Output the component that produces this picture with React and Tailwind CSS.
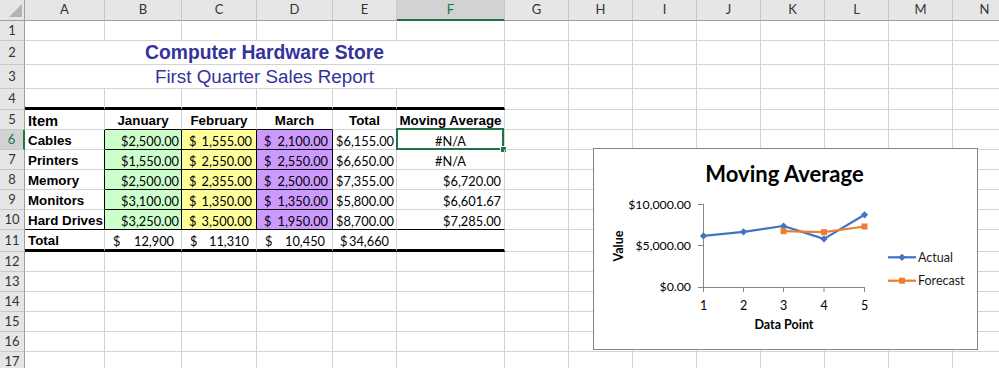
import React from 'react';

const ARIAL = "font-['Liberation_Sans',Arial,sans-serif]";
const CAL = "font-['Lato',sans-serif]";
const GRID_R = 'border-r-[#d4d4d4]';
const GRID_B = 'border-b border-b-[#d4d4d4]';
const BLK_R = 'border-r-black';
const BLK_B = 'border-b border-b-black';
const THICK_B = 'border-b-[3px] border-b-black';

const EXTRA = ['G', 'H', 'I', 'J', 'K', 'L', 'M', 'N'];

function Cell({ w, r = GRID_R, b = GRID_B, className = '', children }) {
  return (
    <div
      className={`relative shrink-0 h-full flex items-end border-r ${r} ${b} whitespace-nowrap leading-[16px] text-black ${w} ${className}`}
    >
      {children}
    </div>
  );
}

function RowHead({ n, sel }) {
  return (
    <div
      className={`shrink-0 w-[25px] h-full flex items-center justify-center border-b border-b-[#c8c8c8] ${CAL} text-[13px] ${
        sel
          ? 'bg-[#d2d2d2] text-[#217346] border-r-2 border-r-[#217346]'
          : 'bg-[#e6e6e6] text-[#333] border-r border-r-[#9e9e9e]'
      }`}
    >
      {n}
    </div>
  );
}

function ColHead({ w, label, sel }) {
  return (
    <div
      className={`shrink-0 h-full flex items-center justify-center border-r border-r-[#c8c8c8] ${CAL} text-[13px] ${w} ${
        sel
          ? 'bg-[#d2d2d2] text-[#217346] border-b-2 border-b-[#217346]'
          : 'bg-[#e6e6e6] text-[#333] border-b border-b-[#9e9e9e]'
      }`}
    >
      {label}
    </div>
  );
}

function Extra() {
  return (
    <>
      {EXTRA.map((c) => (
        <Cell key={c} w="w-[64px]" />
      ))}
    </>
  );
}

function Acc({ v, pl = 'pl-[7px]', pr = 'pr-[4px]' }) {
  return (
    <div className={`flex w-full justify-between ${pl} ${pr} ${CAL} text-[12.8px]`}>
      <span>$</span>
      <span>{v}</span>
    </div>
  );
}

function Cur({ v, pr = 'pr-[2px]' }) {
  return <div className={`w-full text-right ${pr} ${CAL} text-[12.8px]`}>{v}</div>;
}

function Label({ children, big }) {
  return (
    <div className={`pl-[3px] ${ARIAL} font-bold ${big ? 'text-[14.67px]' : 'text-[13.33px]'}`}>
      {children}
    </div>
  );
}

function Head({ children }) {
  return <div className={`w-full text-center ${ARIAL} font-bold text-[13.33px]`}>{children}</div>;
}

const data = [
  { n: 6, item: 'Cables', b: '$2,500.00', c: '1,555.00', d: '2,100.00', e: '$6,155.00', f: '#N/A' },
  { n: 7, item: 'Printers', b: '$1,550.00', c: '2,550.00', d: '2,550.00', e: '$6,650.00', f: '#N/A' },
  { n: 8, item: 'Memory', b: '$2,500.00', c: '2,355.00', d: '2,500.00', e: '$7,355.00', f: '$6,720.00' },
  { n: 9, item: 'Monitors', b: '$3,100.00', c: '1,350.00', d: '1,350.00', e: '$5,800.00', f: '$6,601.67' },
  { n: 10, item: 'Hard Drives', b: '$3,250.00', c: '3,500.00', d: '1,950.00', e: '$8,700.00', f: '$7,285.00' },
];

function Chart() {
  const actual = [
    [703.5, 235.9],
    [743.5, 231.8],
    [783.5, 226],
    [824, 238.9],
    [864.5, 214.8],
  ];
  const forecast = [
    [783.5, 231.2],
    [824, 232.2],
    [864.5, 226.5],
  ];
  const blue = '#4472c4';
  const orange = '#ed7d31';
  const axis = '#868686';
  const font = 'Lato, sans-serif';
  const diamond = (x, y, k) => (
    <polygon key={k} points={`${x},${y - 3.6} ${x + 3.6},${y} ${x},${y + 3.6} ${x - 3.6},${y}`} fill={blue} />
  );
  const square = (x, y, k) => <rect key={k} x={x - 3} y={y - 3} width="6" height="6" fill={orange} />;
  return (
    <div className="absolute left-[593px] top-[148px] w-[385px] h-[202px] border border-[#868686] bg-white">
      <svg width="383" height="200" viewBox="594 149 383 200" className="block">
        <text x="784.5" y="181.5" textAnchor="middle" fontFamily={font} fontWeight="700" fontSize="22" fill="#000">
          Moving Average
        </text>
        {[
          ['$10,000.00', 208.5],
          ['$5,000.00', 250],
          ['$0.00', 291],
        ].map(([t, y]) => (
          <text key={t} x="691" y={y} textAnchor="end" fontFamily={font} fontSize="12.3" fill="#000">
            {t}
          </text>
        ))}
        <line x1="703.5" y1="204" x2="703.5" y2="287.5" stroke={axis} />
        {[204.5, 245.5, 287.5].map((y) => (
          <line key={y} x1="698" y1={y} x2="703.5" y2={y} stroke={axis} />
        ))}
        <line x1="703" y1="287.5" x2="865" y2="287.5" stroke={axis} />
        {[703.5, 743.5, 783.5, 824, 864.5].map((x, i) => (
          <g key={x}>
            <line x1={x} y1="287.5" x2={x} y2="292" stroke={axis} />
            <text x={x} y="309.5" textAnchor="middle" fontFamily={font} fontSize="12.5" fill="#000">
              {i + 1}
            </text>
          </g>
        ))}
        <text x="784" y="329" textAnchor="middle" fontFamily={font} fontWeight="700" fontSize="12.5" fill="#000">
          Data Point
        </text>
        <text
          transform="translate(623.3,246) rotate(-90)"
          textAnchor="middle"
          fontFamily={font}
          fontWeight="700"
          fontSize="12.5"
          fill="#000"
        >
          Value
        </text>
        <polyline points={actual.map((p) => p.join(',')).join(' ')} fill="none" stroke={blue} strokeWidth="2.25" strokeLinejoin="round" />
        {actual.map(([x, y], i) => diamond(x, y, 'a' + i))}
        <polyline points={forecast.map((p) => p.join(',')).join(' ')} fill="none" stroke={orange} strokeWidth="2.25" strokeLinejoin="round" />
        {forecast.map(([x, y], i) => square(x, y, 'f' + i))}
        <line x1="888" y1="257.3" x2="916" y2="257.3" stroke={blue} strokeWidth="2.25" />
        {diamond(902, 257.3, 'la')}
        <text x="918" y="261.5" fontFamily={font} fontSize="12.5" fill="#1a1a1a">
          Actual
        </text>
        <line x1="888" y1="280.7" x2="916" y2="280.7" stroke={orange} strokeWidth="2.25" />
        {square(902, 280.7, 'lf')}
        <text x="918" y="284.9" fontFamily={font} fontSize="12.5" fill="#1a1a1a">
          Forecast
        </text>
      </svg>
    </div>
  );
}

export default function App() {
  return (
    <div className="relative w-[999px] h-[368px] overflow-hidden bg-white">
      {/* column headers */}
      <div className="flex h-[21px]">
        <div className="shrink-0 w-[25px] h-full relative bg-[#e6e6e6] border-r border-r-[#9e9e9e] border-b border-b-[#9e9e9e]">
          <svg className="absolute left-[9px] top-[4px]" width="13" height="13" viewBox="0 0 13 13">
            <polygon points="13,0 13,13 0,13" fill="#b4b4b4" />
          </svg>
        </div>
        <ColHead w="w-[80px]" label="A" />
        <ColHead w="w-[77px]" label="B" />
        <ColHead w="w-[75px]" label="C" />
        <ColHead w="w-[76px]" label="D" />
        <ColHead w="w-[64px]" label="E" />
        <ColHead w="w-[108px]" label="F" sel />
        {EXTRA.map((c) => (
          <ColHead key={c} w="w-[64px]" label={c} />
        ))}
      </div>

      {/* row 1 */}
      <div className="flex h-[20px]">
        <RowHead n={1} />
        <Cell w="w-[80px]" />
        <Cell w="w-[77px]" />
        <Cell w="w-[75px]" />
        <Cell w="w-[76px]" />
        <Cell w="w-[64px]" />
        <Cell w="w-[108px]" />
        <Extra />
      </div>

      {/* row 2 */}
      <div className="flex h-[24px]">
        <RowHead n={2} />
        <Cell w="w-[480px]" className="justify-center">
          <div className={`${ARIAL} font-bold text-[19.3px] leading-[23px] text-[#333399]`}>
            Computer Hardware Store
          </div>
        </Cell>
        <Extra />
      </div>

      {/* row 3 */}
      <div className="flex h-[24px]">
        <RowHead n={3} />
        <Cell w="w-[480px]" className="justify-center">
          <div className={`${ARIAL} text-[18.8px] leading-[23px] text-[#333399]`}>First Quarter Sales Report</div>
        </Cell>
        <Extra />
      </div>

      {/* row 4 */}
      <div className="flex h-[21px]">
        <RowHead n={4} />
        <Cell w="w-[80px]" b={THICK_B} />
        <Cell w="w-[77px]" b={THICK_B} />
        <Cell w="w-[75px]" b={THICK_B} />
        <Cell w="w-[76px]" b={THICK_B} />
        <Cell w="w-[64px]" b={THICK_B} />
        <Cell w="w-[108px]" b={THICK_B} />
        <Extra />
      </div>

      {/* row 5 */}
      <div className="flex h-[20px]">
        <RowHead n={5} />
        <Cell w="w-[80px]">
          <Label big>Item</Label>
        </Cell>
        <Cell w="w-[77px]" b={BLK_B}>
          <Head>January</Head>
        </Cell>
        <Cell w="w-[75px]" b={BLK_B}>
          <Head>February</Head>
        </Cell>
        <Cell w="w-[76px]" b={BLK_B}>
          <Head>March</Head>
        </Cell>
        <Cell w="w-[64px]">
          <Head>Total</Head>
        </Cell>
        <Cell w="w-[108px]">
          <Head>Moving Average</Head>
        </Cell>
        <Extra />
      </div>

      {/* rows 6-10 */}
      {data.map((d) => {
        const last = d.n === 10;
        const bb = last ? BLK_B : GRID_B;
        const na = d.f === '#N/A';
        return (
          <div key={d.n} className="flex h-[20px]">
            <RowHead n={d.n} sel={d.n === 6} />
            <Cell w="w-[80px]" r={BLK_R} b={bb}>
              <Label>{d.item}</Label>
            </Cell>
            <Cell w="w-[77px]" r={BLK_R} b={BLK_B} className="bg-[#ccffcc]">
              <Cur v={d.b} />
            </Cell>
            <Cell w="w-[75px]" r={BLK_R} b={BLK_B} className="bg-[#ffff99]">
              <Acc v={d.c} />
            </Cell>
            <Cell w="w-[76px]" r={BLK_R} b={BLK_B} className="bg-[#cc99ff]">
              <Acc v={d.d} />
            </Cell>
            <Cell w="w-[64px]" b={bb}>
              <Cur v={d.e} />
            </Cell>
            <Cell w="w-[108px]" b={bb}>
              {na ? (
                <div className={`w-full text-center ${CAL} text-[12.8px]`}>{d.f}</div>
              ) : (
                <Cur v={d.f} pr="pr-[3px]" />
              )}
              {d.n === 6 && (
                <>
                  <div className="absolute left-[-1px] top-[-2px] w-[108px] h-[22px] border-2 border-[#217346]" />
                  <div className="absolute left-[103px] top-[16px] w-[7px] h-[7px] bg-[#217346] border border-white" />
                </>
              )}
            </Cell>
            <Extra />
          </div>
        );
      })}

      {/* row 11 */}
      <div className="flex h-[22px]">
        <RowHead n={11} />
        <Cell w="w-[80px]" b={THICK_B}>
          <Label>Total</Label>
        </Cell>
        <Cell w="w-[77px]" b={THICK_B}>
          <Acc v="12,900" pl="pl-[8px]" pr="pr-[7px]" />
        </Cell>
        <Cell w="w-[75px]" b={THICK_B}>
          <Acc v="11,310" pl="pl-[8px]" pr="pr-[7px]" />
        </Cell>
        <Cell w="w-[76px]" b={THICK_B}>
          <Acc v="10,450" pl="pl-[8px]" pr="pr-[7px]" />
        </Cell>
        <Cell w="w-[64px]" b={THICK_B}>
          <Acc v="34,660" pl="pl-[7px]" pr="pr-[7px]" />
        </Cell>
        <Cell w="w-[108px]" b={THICK_B} />
        <Extra />
      </div>

      {/* rows 12-17 */}
      {[12, 13, 14, 15, 16, 17].map((n) => (
        <div key={n} className="flex h-[20px]">
          <RowHead n={n} />
          <Cell w="w-[80px]" />
          <Cell w="w-[77px]" />
          <Cell w="w-[75px]" />
          <Cell w="w-[76px]" />
          <Cell w="w-[64px]" />
          <Cell w="w-[108px]" />
          <Extra />
        </div>
      ))}

      <Chart />
    </div>
  );
}
